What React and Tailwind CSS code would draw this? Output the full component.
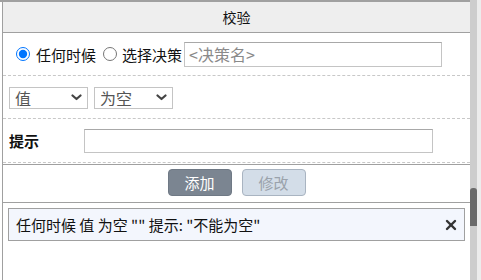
import { X } from "lucide-react"

const Chevron = () => (
  <svg width="11" height="7" viewBox="0 0 11 7" className="pointer-events-none absolute right-[6px] top-[8px]">
    <path d="M1.5 1.5 L5.5 5 L9.5 1.5" fill="none" stroke="#444" strokeWidth="2.2" strokeLinecap="round" strokeLinejoin="round" />
  </svg>
)

const Select = ({ value, options }) => (
  <div className="relative h-[22px] w-[79px]">
    <select
      defaultValue={value}
      className="h-full w-full appearance-none border border-[#c4c4c4] bg-white pl-[5px] text-[16px] leading-none text-[#555]"
    >
      {options.map((o) => (
        <option key={o}>{o}</option>
      ))}
    </select>
    <Chevron />
  </div>
)

const App = () => {
  return (
    <div className="flex h-[280px] w-[481px] overflow-hidden bg-white font-['Noto_Sans_CJK_SC',sans-serif] text-[#111]">
      {/* Panel */}
      <div className="flex-1 border-t-2 border-[#a0a0a0]">
        <div className="ml-[2px] h-full border-l border-[#a0a0a0]">
          {/* Title */}
          <div className="flex h-[31px] items-center justify-center border-b border-[#a0a0a0] bg-[#eeeeee] text-[14px] leading-none">
            校验
          </div>

          {/* Radio row */}
          <div className="flex h-[43px] items-center border-b border-dashed border-[#c8c8c8] pl-[13px] text-[15px] leading-none">
            <input type="radio" name="when" defaultChecked className="m-0 h-[14px] w-[14px] accent-[#0075ff]" />
            <span className="ml-[6px]">任何时候</span>
            <input type="radio" name="when" className="ml-[7px] h-[14px] w-[14px]" />
            <span className="ml-[5px]">选择决策</span>
            <input
              placeholder="<决策名>"
              className="ml-[2px] h-[25px] w-[258px] border border-[#c4c4c4] border-t-[#a8a8a8] px-[4px] text-[16px] placeholder:text-[#8a8a8a]"
            />
          </div>

          {/* Condition row */}
          <div className="flex h-[43px] items-center gap-[6px] border-b border-dashed border-[#c8c8c8] pl-[6px]">
            <Select value="值" options={["值"]} />
            <Select value="为空" options={["为空", "不为空"]} />
          </div>

          {/* Hint row */}
          <div className="flex h-[44px] items-center border-b border-dashed border-[#c8c8c8] pl-[6px]">
            <span className="w-[75px] text-[15px] font-bold leading-none">提示</span>
            <input className="h-[24px] w-[349px] border border-[#c4c4c4] border-t-[#a8a8a8] px-[4px] text-[14px]" />
          </div>

          {/* Buttons */}
          <div className="mt-[1px] flex h-[39px] justify-center gap-[10px] border-y border-[#a0a0a0] pt-[4px]">
            <button className="h-[27px] w-[64px] rounded-[4px] border border-[#6f7985] bg-[#7b8591] text-[15px] leading-none text-white">
              添加
            </button>
            <button
              disabled
              className="h-[27px] w-[64px] rounded-[4px] border border-[#a9b4c1] bg-[#d3dde8] text-[15px] leading-none text-[#9aa2ab]"
            >
              修改
            </button>
          </div>

          {/* List */}
          <div className="mx-[5px] mt-[5px] flex h-[33px] items-center justify-between border border-[#a0a0a0] bg-[#f3f6fd] pl-[7px] pr-[5px] text-[15px] leading-none">
            <span>任何时候 值 为空 "" 提示: "不能为空"</span>
            <X size={16} strokeWidth={3.6} color="#333" />
          </div>
        </div>
      </div>

      {/* Scrollbar */}
      <div className="flex h-full w-[11px]">
        <div className="w-[7px] bg-[#cdcdcd] pt-[188px]">
          <div className="h-[38px] rounded-t-[3px] bg-[#6a6a6a]" />
        </div>
        <div className="w-[4px] bg-[#ececec]" />
      </div>
    </div>
  )
}

export default App
